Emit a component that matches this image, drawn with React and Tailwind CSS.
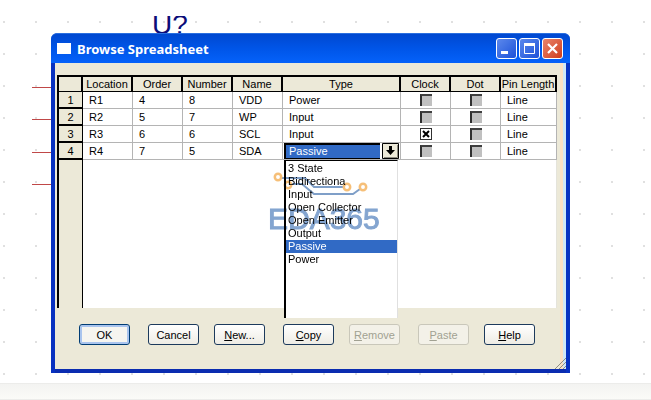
import React, { useState } from "react";

const pins = [
  { location: "R1", order: 4, number: 8, name: "VDD", type: "Power" },
  { location: "R2", order: 5, number: 7, name: "WP", type: "Input" },
  { location: "R3", order: 6, number: 6, name: "SCL", type: "Input", clock: true },
  { location: "R4", order: 7, number: 5, name: "SDA", type: "Passive" },
];

const pinTypes = [
  "3 State",
  "Bidirectiona",
  "Input",
  "Open Collector",
  "Open Emitter",
  "Output",
  "Passive",
  "Power",
];

const headers = ["Location", "Order", "Number", "Name", "Type", "Clock", "Dot", "Pin Length"];

const HeadCell = ({ children }) => (
  <th
    scope="col"
    className="h-[17px] p-0 font-normal whitespace-nowrap border-t-2 border-b border-r-2 border-black bg-[#ece9d8] leading-[14px]"
  >
    {children}
  </th>
);

const Cell = ({ children }) => (
  <td className="h-[17px] py-0 pr-0 pl-[6px] border-r border-b border-[#b4b4b4] leading-4">
    {children}
  </td>
);

const CheckCell = ({ label, defaultChecked }) => (
  <td className="h-[17px] p-0 border-r border-b border-[#b4b4b4]">
    <div className="relative mx-auto w-3 h-3">
      <input
        type="checkbox"
        aria-label={label}
        defaultChecked={defaultChecked}
        className="peer block appearance-none w-3 h-3 bg-[#c0c0c0] border-t-2 border-l-2 border-t-[#404040] border-l-[#303030] checked:bg-white checked:border checked:border-[#303030]"
      />
      <svg
        viewBox="0 0 12 12"
        className="absolute inset-0 hidden peer-checked:block pointer-events-none"
      >
        <path d="M3 3 L9 9 M9 3 L3 9" stroke="#000" strokeWidth="2" />
      </svg>
    </div>
  </td>
);

const Watermark = () => (
  <div className="absolute -left-4 top-[11px] w-28 pointer-events-none mix-blend-multiply">
    <svg viewBox="0 0 112 32" className="block w-28 h-8" fill="none">
      <path
        d="M14 7 H37 L46 16 H75 M24 13 H34 L46 23 H85 L92 18"
        stroke="#7f9fc8"
        strokeWidth="2"
      />
      <g stroke="#f6bf78" strokeWidth="2.5">
        <circle cx="10" cy="6" r="3.2" />
        <circle cx="20" cy="14" r="3.2" />
        <circle cx="79" cy="16" r="3.2" />
        <circle cx="95" cy="16" r="3.2" />
      </g>
    </svg>
    <p className="text-[30px] leading-8 text-[#84a5d0] [-webkit-text-stroke:1px_#84a5d0]">
      EDA365
    </p>
  </div>
);

const TypePicker = ({ value, onChange }) => (
  <td className="h-[17px] p-0 border-r border-b border-[#b4b4b4]">
    <div className="relative h-4 pl-px">
      <select
        aria-label="R4 type"
        value={value}
        onChange={(e) => onChange(e.target.value)}
        className="block appearance-none w-full h-4 py-0 pl-[3px] pr-5 rounded-none border-2 border-r-0 border-b border-black bg-[#316ac5] bg-clip-padding text-white leading-[13px] outline-none"
      >
        {pinTypes.map((type) => (
          <option key={type}>{type}</option>
        ))}
      </select>
      <span className="absolute right-0 top-0 flex items-center justify-center w-5 h-4 bg-white pointer-events-none">
        <svg viewBox="0 0 17 16" className="w-[17px] h-4">
          <path d="M0.5 0.5 H16.5 V15.5 H0.5 Z" fill="#ece9d8" stroke="#000" />
          <path d="M15.5 2 V14.5 H2" stroke="#8c8a80" fill="none" />
          <path d="M7 3 H10 V7 H13 L8.500 12 L4 7 H7 Z" fill="#000" />
        </svg>
      </span>
      <div className="absolute left-px right-[2px] top-[17px] z-10">
        <ul
          role="listbox"
          aria-label="Pin types"
          className="h-[158px] pt-px border-l-2 border-t border-black border-r border-r-[#e0e0e0] bg-white"
        >
          {pinTypes.map((type) => (
            <li
              key={type}
              role="option"
              aria-selected={type === value}
              onClick={() => onChange(type)}
              className="h-[13px] pl-[2px] leading-[13px] whitespace-nowrap aria-selected:bg-[#316ac5] aria-selected:text-white"
            >
              {type}
            </li>
          ))}
        </ul>
        <Watermark />
      </div>
    </div>
  </td>
);

const DialogButton = ({ children, primary, disabled }) => (
  <button
    type="button"
    disabled={disabled}
    className={
      "w-[51px] h-[21px] rounded-[3px] border leading-4 whitespace-nowrap " +
      (disabled
        ? "border-[#c9c7ba] bg-[#f3f1e8] text-[#a1a192]"
        : primary
        ? "border-[#003c74] bg-[#f6f5f0] shadow-[inset_0_0_0_2px_#a9c4ee]"
        : "border-[#1c3a5c] bg-linear-to-b from-white to-[#eeece4]")
    }
  >
    {children}
  </button>
);

const TitleBar = () => (
  <div className="flex items-center h-[30px] pl-[6px] pr-[7px] rounded-t-[6px] bg-linear-to-b from-[#0048d0] via-[#0055e8] to-[#0562fa] border-t border-[#2a6fe0]">
    <span className="w-[14px] h-[11px] bg-white" />
    <h1 className="flex-1 pl-[6px] font-['Noto_Sans',sans-serif] text-[13px] leading-5 font-bold text-white whitespace-nowrap">
      Browse Spreadsheet
    </h1>
    <div className="flex gap-[2px]">
      <button
        type="button"
        aria-label="Minimize"
        className="w-[21px] h-[21px] rounded-[3px] border border-white bg-linear-to-br from-[#5c88ec] to-[#1c50d8]"
      >
        <svg viewBox="0 0 19 19" className="block w-[19px] h-[19px]">
          <path d="M4 12 H11 V15 H4 Z" fill="#fff" />
        </svg>
      </button>
      <button
        type="button"
        aria-label="Maximize"
        className="w-[21px] h-[21px] rounded-[3px] border border-white bg-linear-to-br from-[#5c88ec] to-[#1c50d8]"
      >
        <svg viewBox="0 0 19 19" className="block w-[19px] h-[19px]">
          <path d="M4.500 5 H14.500 V14.500 H4.500 Z" fill="none" stroke="#fff" />
          <path d="M4 4 H15 V7 H4 Z" fill="#fff" />
        </svg>
      </button>
      <button
        type="button"
        aria-label="Close"
        className="w-[21px] h-[21px] rounded-[3px] border border-white bg-linear-to-br from-[#e8836a] to-[#cf3a14]"
      >
        <svg viewBox="0 0 19 19" className="block w-[19px] h-[19px]">
          <path d="M5 5 L14 14 M14 5 L5 14" stroke="#fff" strokeWidth="2.2" />
        </svg>
      </button>
    </div>
  </div>
);

const App = () => {
  const [type, setType] = useState(pins[3].type);

  return (
    <div className="flex flex-col min-h-screen bg-white font-['Liberation_Sans',Arial,sans-serif] text-[11px] text-black">
      <main className="relative pb-[10px] bg-[radial-gradient(circle,#e0e0e0_1px,transparent_1px)] bg-size-[32px_32px] bg-position-[-12px_6px]">
        {/* part reference and pin wires on the schematic canvas */}
        <div className="h-[33px] pt-4">
          <p className="h-[17px] pl-[152px] overflow-hidden text-[28px] leading-[17px] text-[#0c0c78]">
            U?
          </p>
        </div>
        <svg viewBox="0 0 20 100" className="absolute left-8 top-[86px] w-5 h-[100px]">
          <path d="M0 1.500 H20 M0 33.500 H20 M0 66.500 H20 M0 98.500 H20" stroke="#c04848" />
        </svg>

        <section className="relative ml-[51px] mr-[81px] rounded-t-[7px] bg-[#0831c0]">
          <TitleBar />
          <div className="flex mx-1 border-b-4 border-[#0a2cb0] bg-[#ece9d8]">
            <div className="flex-1 pt-3 pb-6">
              <div className="ml-[2px] bg-white">
                <table className="w-full table-fixed border-separate border-spacing-0">
                  <colgroup>
                    <col className="w-[26px]" />
                    <col className="w-[50px]" />
                    <col className="w-[50px]" />
                    <col className="w-[50px]" />
                    <col className="w-[50px]" />
                    <col />
                    <col className="w-[50px]" />
                    <col className="w-[50px]" />
                    <col className="w-[56px]" />
                  </colgroup>
                  <thead>
                    <tr>
                      <td className="p-0 border-t-2 border-b border-l-2 border-r-2 border-black bg-[#ece9d8]" />
                      {headers.map((header) => (
                        <HeadCell key={header}>{header}</HeadCell>
                      ))}
                    </tr>
                  </thead>
                  <tbody>
                    {pins.map((pin, index) => (
                      <tr key={pin.location}>
                        <th
                          scope="row"
                          className="h-[17px] pt-px px-0 pb-0 font-normal leading-[14px] border-l-2 border-r border-b-2 border-black bg-[#ece9d8]"
                        >
                          {index + 1}
                        </th>
                        <Cell>{pin.location}</Cell>
                        <Cell>{pin.order}</Cell>
                        <Cell>{pin.number}</Cell>
                        <Cell>{pin.name}</Cell>
                        {index === 3 ? (
                          <TypePicker value={type} onChange={setType} />
                        ) : (
                          <Cell>{pin.type}</Cell>
                        )}
                        <CheckCell label={pin.location + " clock"} defaultChecked={pin.clock} />
                        <CheckCell label={pin.location + " dot"} />
                        <Cell>Line</Cell>
                      </tr>
                    ))}
                  </tbody>
                </table>
                <div className="h-[148px] border-r border-[#e4e4dc]">
                  <div className="w-[26px] h-full border-l-2 border-r border-black bg-[#ece9d8]" />
                </div>
              </div>

              <div className="flex gap-[18px] pt-4 pl-6">
                <DialogButton primary>OK</DialogButton>
                <div className="flex gap-[15px]">
                  <DialogButton>Cancel</DialogButton>
                  <DialogButton>
                    <u>N</u>ew...
                  </DialogButton>
                </div>
                <div className="flex gap-[15px]">
                  <DialogButton>
                    <u>C</u>opy
                  </DialogButton>
                  <DialogButton disabled>
                    <u>R</u>emove
                  </DialogButton>
                </div>
                <div className="flex gap-[15px]">
                  <DialogButton disabled>
                    <u>P</u>aste
                  </DialogButton>
                  <DialogButton>
                    <u>H</u>elp
                  </DialogButton>
                </div>
              </div>
            </div>
            <div className="shrink-0 w-[3px] ml-[3px] bg-[#fbdfc2]" />
            <div className="shrink-0 w-[3px] bg-[#cfe6f6]" />
          </div>
          <svg viewBox="0 0 12 12" className="absolute right-1 bottom-1 w-3 h-3">
            <path d="M1 12 L12 1 M5 12 L12 5 M9 12 L12 9" stroke="#8f8d80" />
          </svg>
        </section>
      </main>
      <footer className="flex-1 border-t border-b border-[#ececea] bg-linear-to-b from-[#f3f3f1] to-[#fbfbf8]" />
    </div>
  );
};

export default App;
